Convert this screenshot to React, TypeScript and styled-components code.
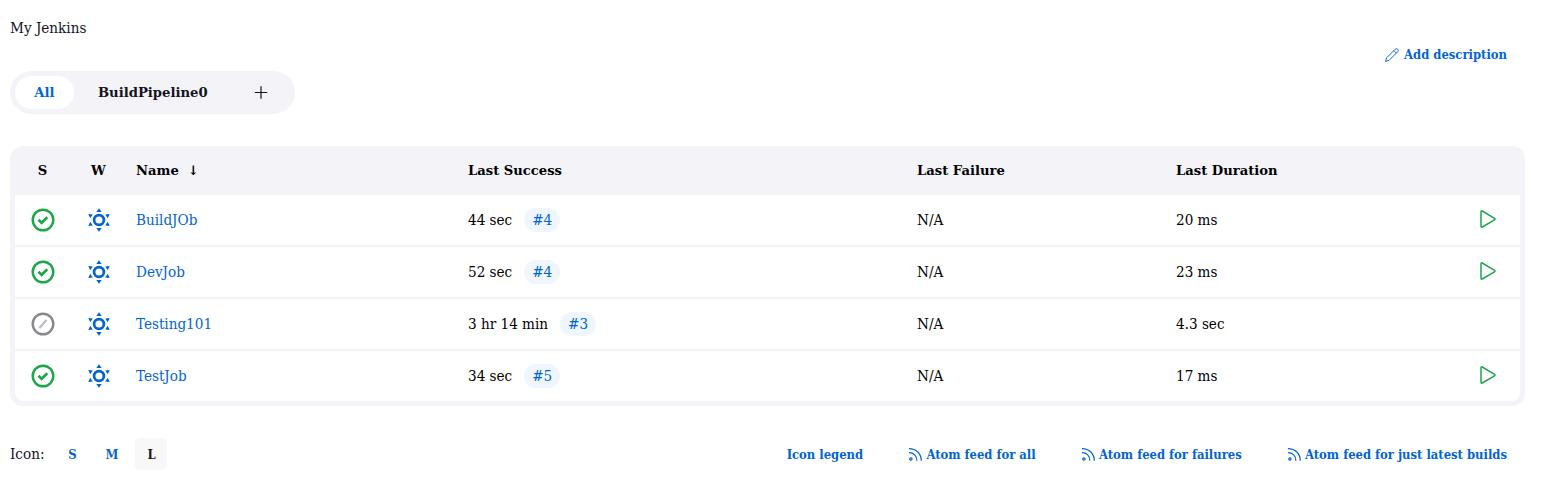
import React from "react";
import styled, { createGlobalStyle, css } from "styled-components";

const condensed = css`
  font-family: "DejaVu Serif Condensed", "DejaVu Serif", serif;
  font-stretch: condensed;
`;

const GlobalStyle = createGlobalStyle`
  *, *::before, *::after { box-sizing: border-box; }
  body { margin: 0; background: #fff; color: #14141f; }
`;

const Page = styled.main`
  ${condensed}
  display: flex;
  flex-direction: column;
  width: 1525px;
  height: 495px;
  padding: 18px 0 0 10px;
  font-size: 15.1px;
  line-height: 20px;
`;

const Description = styled.div`
  height: 20px;
`;

const DescriptionBar = styled.div`
  display: flex;
  justify-content: flex-end;
  height: 33px;
  padding: 7px 18px 0 0;
`;

const ActionLink = styled.a<{ $gap?: number }>`
  display: flex;
  align-items: center;
  gap: ${(p) => p.$gap ?? 4}px;
  height: 20px;
  color: #0264d4;
  font-size: 12.9px;
  font-weight: 700;
  text-decoration: none;
  white-space: nowrap;
  svg { flex: none; }
`;

const TabBar = styled.nav`
  display: flex;
  align-self: flex-start;
  width: 285px;
  height: 43px;
  padding: 5px;
  border-radius: 22px;
  background: #f3f3f8;
  font-family: "DejaVu Serif", serif;
  font-stretch: normal;
  font-size: 13.2px;
  font-weight: 700;
`;

const Tab = styled.a<{ $active?: boolean; $width: number }>`
  display: flex;
  align-items: center;
  justify-content: center;
  width: ${(p) => p.$width}px;
  height: 33px;
  border-radius: 17px;
  color: ${(p) => (p.$active ? "#0264d4" : "#14141f")};
  background: ${(p) => (p.$active ? "#fff" : "transparent")};
`;

const Table = styled.section`
  width: 1515px;
  height: 260px;
  margin-top: 32px;
  padding: 0 5px 5px;
  border-radius: 13px;
  background: #f3f3f8;
  color: #000;
`;

const columns = css`
  display: grid;
  grid-template-columns: 56px 56px 341px 449px 259px 1fr 65px;
  align-items: center;
`;

const HeaderRow = styled.div`
  ${columns}
  height: 49px;
  font-family: "DejaVu Serif", serif;
  font-stretch: normal;
  font-size: 13.15px;
  font-weight: 700;
`;

const Body = styled.div`
  display: flex;
  flex-direction: column;
  gap: 2px;
  border-radius: 0 0 8px 8px;
  overflow: hidden;
`;

const Row = styled.div`
  ${columns}
  height: 50px;
  background: #fff;
`;

const IconCell = styled.div`
  display: flex;
  justify-content: center;
`;

const HeadIcon = styled(IconCell)`
  padding-right: 1px;
`;

const Cell = styled.div<{ $indent?: number }>`
  display: flex;
  align-items: center;
  padding-left: ${(p) => p.$indent ?? 0}px;
`;

const SortArrow = styled.span`
  margin-left: 9px;
`;

const JobLink = styled.a`
  color: #0264d4;
`;

const Build = styled.a`
  display: flex;
  align-items: center;
  justify-content: center;
  width: 36px;
  height: 24px;
  margin-left: 12px;
  border-radius: 12px;
  background: #f0f6fe;
  color: #0264d4;
`;

const Footer = styled.footer`
  display: flex;
  align-items: center;
  justify-content: space-between;
  height: 32px;
  margin-top: 32px;
  padding-right: 18px;
`;

const Sizes = styled.div`
  display: flex;
  align-items: center;
`;

const SizeLabel = styled.span`
  width: 46px;
`;

const Size = styled.a<{ $selected?: boolean }>`
  display: flex;
  align-items: center;
  justify-content: center;
  width: 32px;
  height: 32px;
  margin-right: 7.5px;
  padding: 1px 0 0 1px;
  border-radius: 5px;
  font-size: 12.9px;
  font-weight: 700;
  color: ${(p) => (p.$selected ? "#14141f" : "#0264d4")};
  background: ${(p) => (p.$selected ? "#f8f8f8" : "transparent")};
`;

const Feeds = styled.div`
  display: flex;
  gap: 46.3px;
  padding-top: 1px;
`;

const Success = () => (
  <svg width="24" height="24" viewBox="0 0 24 24" fill="none" stroke="#1ea64b">
    <circle cx="12" cy="12" r="10.3" strokeWidth="2.4" />
    <path d="M7.5 11.8l3.1 3 5.7-5.6" strokeWidth="2.7" />
  </svg>
);

const NotBuilt = () => (
  <svg width="24" height="24" viewBox="0 0 24 24" fill="none">
    <circle cx="12" cy="12" r="10.3" stroke="#88888f" strokeWidth="2.4" />
    <path d="M8.5 16l7-8" stroke="#bbbbc0" strokeWidth="2.3" />
  </svg>
);

const Sunny = () => (
  <svg width="24" height="24" viewBox="0 0 24 24" fill="#0264d4">
    <circle cx="12" cy="12" r="4.9" fill="none" stroke="#0264d4" strokeWidth="2.7" />
    <path d="M12 .2l2.7 3.7H9.3zM12 23.8l2.7-3.7H9.3zM1.3 5.9l4.5.5-2.6 3.8zM22.7 5.9l-4.5.5 2.6 3.8zM1.3 18.1l4.5-.5-2.6-3.8zM22.7 18.1l-4.5-.5 2.6-3.8z" />
  </svg>
);

const Play = () => (
  <svg width="18" height="20" viewBox="0 0 18 20" fill="none" stroke="#1ea64b" strokeWidth="1.5" strokeLinejoin="round">
    <path d="M2 1.7v14.6c0 .8.7 1.1 1.3.7l12.2-7.2c.7-.4.7-1.1 0-1.5L3.3 1C2.7.6 2 .9 2 1.7z" />
  </svg>
);

const Pencil = () => (
  <svg width="14" height="14" viewBox="0 0 14 14" fill="none" stroke="#0264d4" strokeWidth=".95" strokeLinejoin="round">
    <path d="M.6 13.4l1-3.6 8.5-8.5c.8-.8 1.8-.8 2.5-.1.8.7.8 1.8 0 2.6L4.1 12.3zM8.8 2.6l2.6 2.6" />
  </svg>
);

const Rss = () => (
  <svg width="13" height="14" viewBox="0 0 13 14" fill="none" stroke="#0264d4" strokeWidth="1.2">
    <circle cx="1.9" cy="11" r="1.15" />
    <path d="M0 4.7c4.7 0 7.9 3.3 7.9 8.1M0 .6c7.1 0 12.3 5.1 12.3 12.2" />
  </svg>
);

const Plus = () => (
  <svg width="14" height="14" viewBox="0 0 14 14" stroke="#14141f" strokeWidth="1.2">
    <path d="M7 .3v12.4M.8 6.5h12.4" />
  </svg>
);

const jobs = [
  { name: "BuildJOb", success: "44 sec", build: "#4", duration: "20 ms", active: true },
  { name: "DevJob", success: "52 sec", build: "#4", duration: "23 ms", active: true },
  { name: "Testing101", success: "3 hr 14 min", build: "#3", duration: "4.3 sec", active: false },
  { name: "TestJob", success: "34 sec", build: "#5", duration: "17 ms", active: true },
];

export default function App() {
  return (
    <Page>
      <GlobalStyle />
      <Description>My Jenkins</Description>
      <DescriptionBar>
        <ActionLink $gap={5}><Pencil />Add description</ActionLink>
      </DescriptionBar>
      <TabBar>
        <Tab $active $width={59}>All</Tab>
        <Tab $width={157.5}>BuildPipeline0</Tab>
        <Tab $width={58.5}><Plus /></Tab>
      </TabBar>
      <Table>
        <HeaderRow>
          <HeadIcon>S</HeadIcon>
          <HeadIcon>W</HeadIcon>
          <Cell $indent={9}>Name<SortArrow>↓</SortArrow></Cell>
          <Cell>Last Success</Cell>
          <Cell>Last Failure</Cell>
          <Cell>Last Duration</Cell>
        </HeaderRow>
        <Body>
          {jobs.map((job) => (
            <Row key={job.name}>
              <IconCell>{job.active ? <Success /> : <NotBuilt />}</IconCell>
              <IconCell><Sunny /></IconCell>
              <Cell $indent={9}><JobLink>{job.name}</JobLink></Cell>
              <Cell>{job.success}<Build>{job.build}</Build></Cell>
              <Cell>N/A</Cell>
              <Cell>{job.duration}</Cell>
              <IconCell>{job.active && <Play />}</IconCell>
            </Row>
          ))}
        </Body>
      </Table>
      <Footer>
        <Sizes>
          <SizeLabel>Icon:</SizeLabel>
          <Size>S</Size>
          <Size>M</Size>
          <Size $selected>L</Size>
        </Sizes>
        <Feeds>
          <ActionLink>Icon legend</ActionLink>
          <ActionLink><Rss />Atom feed for all</ActionLink>
          <ActionLink><Rss />Atom feed for failures</ActionLink>
          <ActionLink><Rss />Atom feed for just latest builds</ActionLink>
        </Feeds>
      </Footer>
    </Page>
  );
}
